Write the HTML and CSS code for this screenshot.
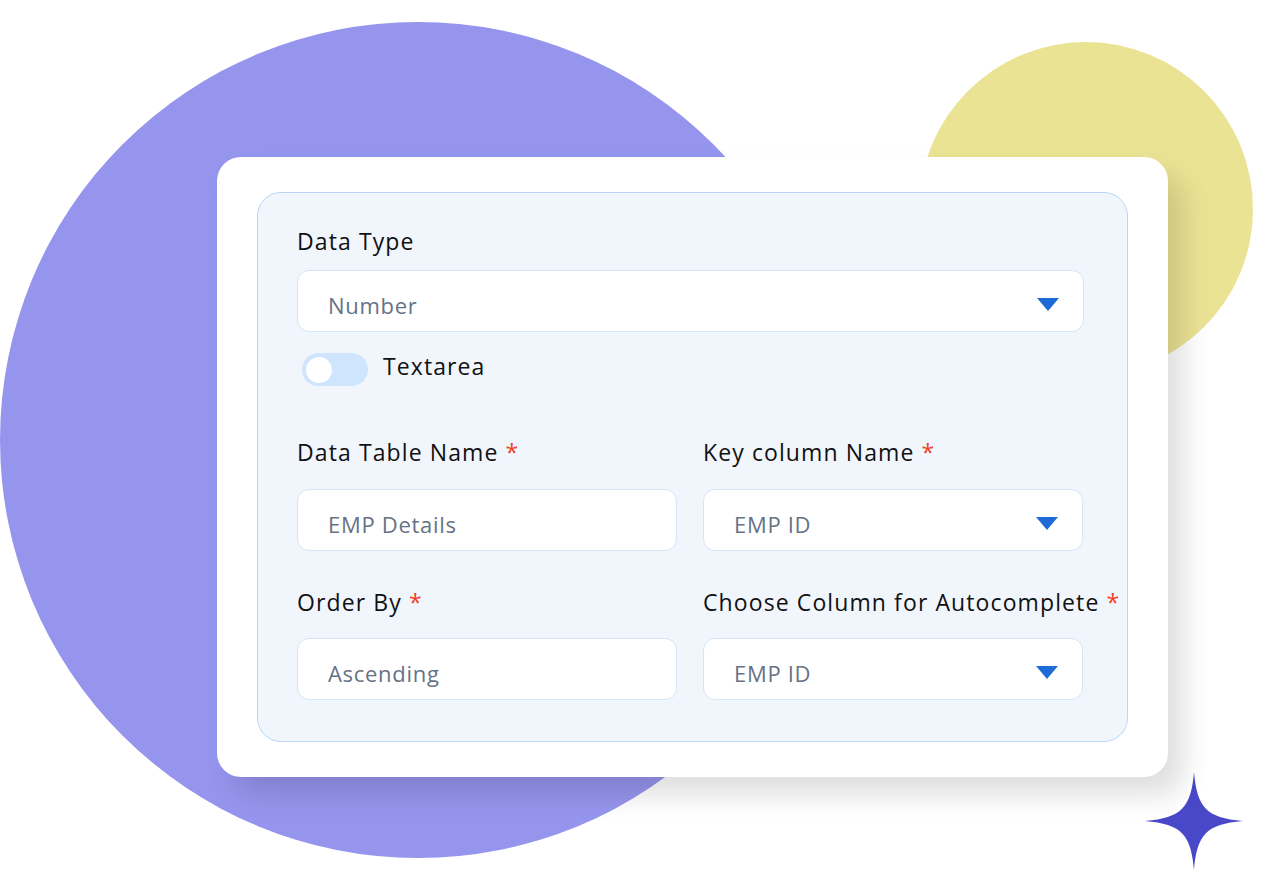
FILE: index.html
```html
<!DOCTYPE html>
<html lang="en">
<head>
    <meta charset="UTF-8">
    <meta name="viewport" content="width=device-width, initial-scale=1.0">
    <title>Data field settings</title>
    <link rel="stylesheet" href="styles.css">
</head>
<body>
    <div class="stage">
        <div class="blob blob-purple"></div>
        <div class="blob blob-yellow"></div>
        <svg class="sparkle" width="100" height="100" viewBox="-50 -50 100 100">
            <path d="M0,-49 C3,-14 12,-3 49,0 C12,3 3,14 0,49 C-3,14 -12,3 -49,0 C-12,-3 -3,-14 0,-49 Z" fill="#4848c9"/>
        </svg>

        <div class="card">
            <div class="panel">
                <label class="field-label">Data Type</label>
                <div class="control select">
                    <span class="value">Number</span>
                    <span class="caret"></span>
                </div>

                <div class="toggle-row">
                    <span class="toggle"><span class="knob"></span></span>
                    <span class="toggle-text">Textarea</span>
                </div>

                <div class="grid">
                    <div class="field">
                        <label class="field-label">Data Table Name <span class="req">*</span></label>
                        <div class="control">
                            <span class="value">EMP Details</span>
                        </div>
                    </div>
                    <div class="field">
                        <label class="field-label">Key column Name <span class="req">*</span></label>
                        <div class="control select">
                            <span class="value">EMP ID</span>
                            <span class="caret"></span>
                        </div>
                    </div>
                    <div class="field">
                        <label class="field-label">Order By <span class="req">*</span></label>
                        <div class="control">
                            <span class="value">Ascending</span>
                        </div>
                    </div>
                    <div class="field">
                        <label class="field-label">Choose Column for Autocomplete <span class="req">*</span></label>
                        <div class="control select">
                            <span class="value">EMP ID</span>
                            <span class="caret"></span>
                        </div>
                    </div>
                </div>
            </div>
        </div>
    </div>
</body>
</html>
```

FILE: styles.css
```css
* {
    box-sizing: border-box;
}
body {
    margin: 0;
    background-color: #fff;
    font-family: "Open Sans", "Noto Sans", sans-serif;
    color: #111;
}
.stage {
    position: relative;
    width: 1269px;
    height: 881px;
    overflow: hidden;
    padding: 157px 0 0 217px;
}
.blob {
    position: absolute;
    border-radius: 50%;
}
.blob-purple {
    left: 0;
    top: 22px;
    width: 836px;
    height: 836px;
    background-color: #9695ee;
}
.blob-yellow {
    left: 919px;
    top: 42px;
    width: 334px;
    height: 334px;
    background-color: #ebe394;
}
.sparkle {
    position: absolute;
    left: 1144px;
    top: 771px;
}
.card {
    position: relative;
    width: 951px;
    height: 620px;
    padding: 35px 40px;
    background-color: #fff;
    border-radius: 24px;
    box-shadow: 16px 18px 28px rgba(0, 0, 0, 0.13);
}
.panel {
    height: 550px;
    padding: 33px 43px 0 39px;
    background-color: #f1f6fd;
    border: 1px solid #b9d6f8;
    border-radius: 24px;
}
.field-label {
    display: block;
    height: 30px;
    line-height: 30px;
    font-size: 23px;
    letter-spacing: 1.1px;
    color: #111;
    white-space: nowrap;
}
.req {
    color: #f0401c;
}
.control {
    display: flex;
    align-items: center;
    justify-content: space-between;
    height: 62px;
    margin-top: 14px;
    padding: 8px 24px 0 30px;
    background-color: #fff;
    border: 1px solid #d6e4f6;
    border-radius: 12px;
}
.value {
    font-size: 22px;
    letter-spacing: 0.7px;
    color: #667285;
}
.caret {
    width: 0;
    height: 0;
    margin-top: -2px;
    border-left: 11px solid transparent;
    border-right: 11px solid transparent;
    border-top: 13px solid #1f6bd6;
}
.toggle-row {
    display: flex;
    align-items: flex-start;
    gap: 15px;
    margin: 21px 0 0 5px;
}
.toggle {
    display: flex;
    align-items: center;
    width: 66px;
    height: 33px;
    padding-left: 4px;
    background-color: #cfe5fd;
    border-radius: 17px;
}
.knob {
    width: 26px;
    height: 26px;
    background-color: #fff;
    border-radius: 50%;
}
.toggle-text {
    height: 26px;
    line-height: 26px;
    font-size: 23px;
    letter-spacing: 1.1px;
}
.grid {
    display: grid;
    grid-template-columns: 380px 380px;
    column-gap: 26px;
    row-gap: 36px;
    margin-top: 51px;
}
.field .control {
    margin-top: 22px;
}
.grid .field:nth-child(n+3) .control {
    margin-top: 21px;
}
```
